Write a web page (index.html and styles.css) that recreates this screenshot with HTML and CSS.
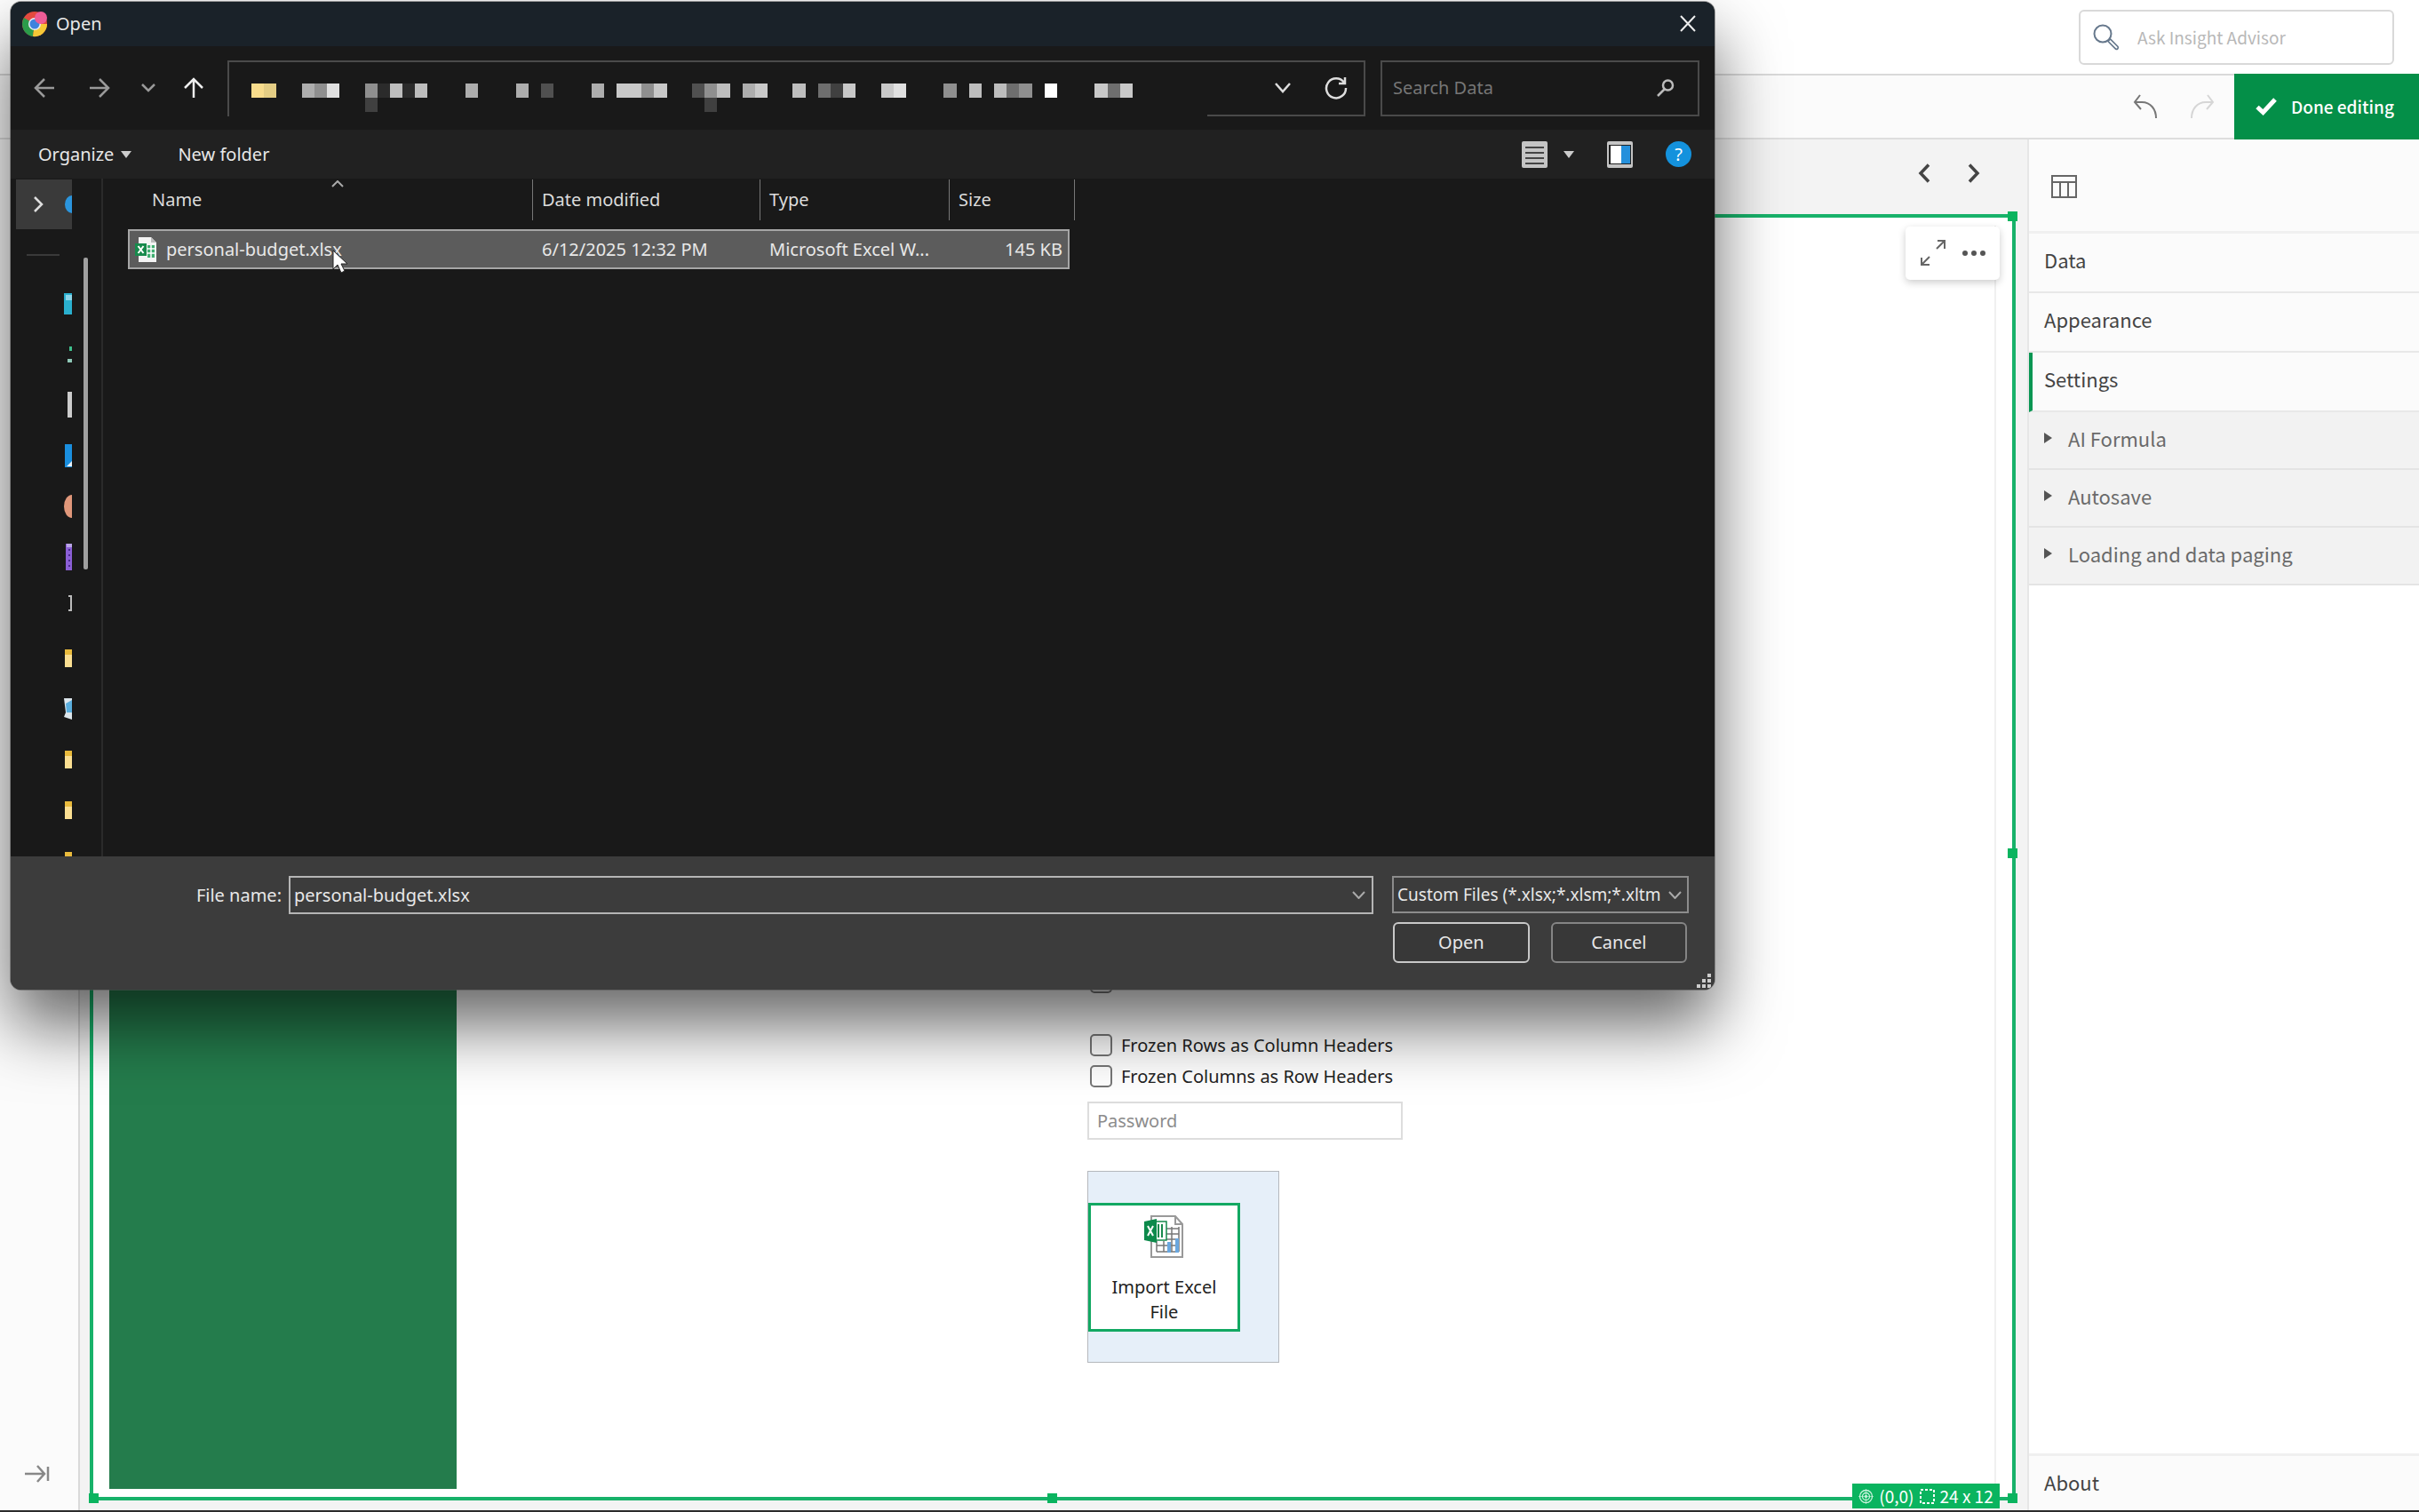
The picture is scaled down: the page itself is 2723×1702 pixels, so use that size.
FILE: index.html
```html
<!DOCTYPE html>
<html lang="en">
<head>
<meta charset="utf-8">
<title>Sheet editor</title>
<link rel="stylesheet" href="styles.css">
</head>
<body>
<header class="topbar">
  <label class="advisor">
    <svg width="30" height="30" viewBox="0 0 30 30" fill="none" stroke="#66788c" stroke-width="2"><circle cx="11" cy="11" r="9.5"/><path d="M17 19.500l2.500-2.500 8.500 8.500a1.800 1.800 0 0 1-2.500 2.500z" stroke-width="1.700"/></svg>
    <input class="advisor-input" type="text" placeholder="Ask Insight Advisor" aria-label="Ask Insight Advisor">
  </label>
</header>
<div class="editbar">
  <button class="icon-button" aria-label="Undo"><svg width="28" height="28" viewBox="0 0 28 28" fill="none" stroke="#777" stroke-width="2"><path d="M8 1L2 9l7 8M2 9h8c10 0 16 8 16 18"/></svg></button>
  <button class="icon-button" aria-label="Redo" disabled><svg width="28" height="28" viewBox="0 0 28 28" fill="none" stroke="#d6d6d6" stroke-width="2"><path d="M20 1l6 8-7 8M26 9h-8C8 9 2 17 2 27"/></svg></button>
  <button class="done"><svg width="24" height="20" viewBox="0 0 24 20" fill="none" stroke="#fff" stroke-width="5"><path d="M2 10.500l6.500 6L22 2"/></svg>Done editing</button>
</div>
<div class="workspace">
  <nav class="rail">
    <button class="icon-button" aria-label="Expand panel"><svg width="28" height="20" viewBox="0 0 28 20" fill="none" stroke="#888" stroke-width="2.500"><path d="M0 10h21M14 1l8 9-8 9M26 2v16"/></svg></button>
  </nav>
  <main class="sheet">
    <div class="sheet-nav">
      <button class="icon-button" aria-label="Previous sheet"><svg width="14" height="22" viewBox="0 0 14 22" fill="none" stroke="#444" stroke-width="3.500"><path d="M12 1.500L3 11l9 9.500"/></svg></button>
      <button class="icon-button" aria-label="Next sheet"><svg width="14" height="22" viewBox="0 0 14 22" fill="none" stroke="#444" stroke-width="3.500"><path d="M2 1.500L11 11l-9 9.500"/></svg></button>
    </div>
    <section class="frame">
      <div class="green-panel"></div>
      <form class="import">
        <label class="check check-first"><input type="checkbox" aria-label="Option"></label>
        <label class="check"><input type="checkbox"> Frozen Rows as Column Headers</label>
        <label class="check"><input type="checkbox"> Frozen Columns as Row Headers</label>
        <input class="password" type="password" placeholder="Password" aria-label="Password">
        <div class="drop">
          <button class="import-button" type="button">
            <svg width="46" height="50" viewBox="0 0 46 50" fill="none">
              <path d="M9 2h27l8 9v37H9z" fill="#fff" stroke="#999" stroke-width="2"/><path d="M36 2v9h8" stroke="#999" stroke-width="2"/>
              <path d="M26 16h14M26 22h14M26 28h14M15 35h25M15 42h25M15 30v12M23 30v12M32 14v28M40 14v28" stroke="#777" stroke-width="1.500"/>
              <path d="M27 31h4v12h-4zM36 27h4v16h-4z" fill="#6aa7df"/>
              <path d="M12 8h14v21H12z" fill="#fff" stroke="#178a4c" stroke-width="1.500"/><path d="M17 11v15M21 11v15" stroke="#178a4c" stroke-width="2"/>
              <path d="M1 8l14-3v27L1 29z" fill="#0d8a4b"/><path d="M5 13l6 11M11 13L5 24" stroke="#fff" stroke-width="2"/>
            </svg>
            <span>Import Excel<br>File</span>
          </button>
        </div>
      </form>
      <div class="object-tools">
        <button class="icon-button" aria-label="Full screen"><svg width="30" height="30" viewBox="0 0 30 30" fill="none" stroke="#666" stroke-width="2"><path d="M19 10L28 1M20 1h8v9M11 19L2 28M2 20v8h9"/></svg></button>
        <button class="icon-button" aria-label="More"><svg width="26" height="6" viewBox="0 0 26 6" fill="#555"><circle cx="3" cy="3" r="3"/><circle cx="13" cy="3" r="3"/><circle cx="23" cy="3" r="3"/></svg></button>
      </div>
      <i class="handle top right"></i><i class="handle middle right"></i><i class="handle bottom right"></i><i class="handle bottom left"></i><i class="handle bottom center"></i>
      <div class="size-badge">
        <svg width="17" height="17" viewBox="0 0 17 17" fill="none" stroke="#c9f2dc" stroke-width="1.300"><circle cx="8.500" cy="8.500" r="7"/><circle cx="8.500" cy="8.500" r="4"/><circle cx="8.500" cy="8.500" r="1"/><path d="M8.500 0v17M0 8.500h17" stroke-width=".6"/></svg>
        <span>(0,0)</span>
        <svg width="17" height="17" viewBox="0 0 17 17" fill="none" stroke="#fff" stroke-width="2"><path d="M1 1h15v15H1z" stroke-dasharray="3 2"/></svg>
        <span>24 x 12</span>
      </div>
    </section>
  </main>
  <aside class="props">
    <div class="props-head"><svg width="29" height="26" viewBox="0 0 29 26" fill="none" stroke="#666" stroke-width="2"><path d="M1 1h27v24H1zM1 8h27M10 8v17M19 8v17"/></svg></div>
    <button class="prop">Data</button>
    <button class="prop">Appearance</button>
    <button class="prop active">Settings</button>
    <button class="subprop"><i class="tri"></i>AI Formula</button>
    <button class="subprop"><i class="tri"></i>Autosave</button>
    <button class="subprop"><i class="tri"></i>Loading and data paging</button>
    <button class="about">About</button>
  </aside>
</div>

<div class="dialog" role="dialog" aria-label="Open">
  <div class="titlebar">
    <svg width="30" height="30" viewBox="0 0 30 30"><circle cx="15" cy="15" r="14" fill="#e34a3f"/><path d="M15 15L3 8a14 14 0 0 0 10 21z" fill="#2b9c4a"/><path d="M15 15h14a14 14 0 0 1-16 14z" fill="#f5c836"/><circle cx="15" cy="15" r="7" fill="#e8eef5"/><circle cx="15" cy="15" r="5.500" fill="#3f83dd"/><circle cx="22" cy="8" r="7" fill="#ee5c96"/></svg>
    <span class="title">Open</span>
    <button class="icon-button" aria-label="Close"><svg width="20" height="20" viewBox="0 0 20 20" stroke="#eee" stroke-width="2"><path d="M2 1l16 17M18 1L2 18"/></svg></button>
  </div>
  <div class="navbar">
    <button class="icon-button" aria-label="Back"><svg width="24" height="24" viewBox="0 0 24 24" fill="none" stroke="#999" stroke-width="2.500"><path d="M23 12H2M12 2L2 12l10 10"/></svg></button>
    <button class="icon-button" aria-label="Forward"><svg width="24" height="24" viewBox="0 0 24 24" fill="none" stroke="#999" stroke-width="2.500"><path d="M1 12h21M12 2l10 10-10 10"/></svg></button>
    <button class="icon-button" aria-label="Recent"><svg width="16" height="10" viewBox="0 0 16 10" fill="none" stroke="#999" stroke-width="2.500"><path d="M1 1l7 7 7-7"/></svg></button>
    <button class="icon-button" aria-label="Up"><svg width="24" height="24" viewBox="0 0 24 24" fill="none" stroke="#eee" stroke-width="2.500"><path d="M12 23V2M2 12L12 2l10 10"/></svg></button>
    <div class="address">
      <svg class="crumbs" viewBox="0 0 70 2" preserveAspectRatio="none" shape-rendering="crispEdges">
        <path fill="#f8dc8c" d="M0 0h1v1H0z"/><path fill="#e4cd84" d="M1 0h1v1H1z"/>
        <path fill="#adadad" d="M4 0h1v1H4zM17 0h1v1h-1zM21 0h1v1h-1zM27 0h1v1h-1zM39 0h1v1h-1z"/>
        <path fill="#8f8f8f" d="M5 0h1v1H5zM9 0h1v1H9zM31 0h1v1h-1zM36 0h1v1h-1zM61 0h1v1h-1zM55 0h1v1h-1z"/>
        <path fill="#e0e0e0" d="M6 0h1v1H6zM51 0h1v1h-1z"/>
        <path fill="#404040" d="M9 1h1v1H9zM36 1h1v1h-1zM46 0h1v1h-1z"/>
        <path fill="#2b2b2b" d="M10 0h1v1h-1zM12 0h1v1h-1z"/>
        <path fill="#bdbdbd" d="M11 0h1v1h-1zM13 0h1v1h-1zM37 0h1v1h-1zM43 0h1v1h-1zM57 0h1v1h-1zM59 0h1v1h-1z"/>
        <path fill="#505050" d="M23 0h1v1h-1zM35 0h1v1h-1z"/>
        <path fill="#c8c8c8" d="M29 0h2v1h-2zM32 0h1v1h-1zM40 0h1v1h-1zM47 0h1v1h-1zM50 0h1v1h-1zM67 0h1v1h-1zM69 0h1v1h-1z"/>
        <path fill="#6e6e6e" d="M45 0h1v1h-1zM60 0h1v1h-1zM68 0h1v1h-1z"/>
        <path fill="#fff" d="M63 0h1v1h-1z"/>
      </svg>
      <div class="address-end">
        <button class="icon-button" aria-label="Previous locations"><svg width="18" height="12" viewBox="0 0 18 12" fill="none" stroke="#ddd" stroke-width="2.500"><path d="M1 1l8 9 8-9"/></svg></button>
        <button class="icon-button" aria-label="Refresh"><svg width="26" height="26" viewBox="0 0 26 26" fill="none" stroke="#ddd" stroke-width="2.500"><path d="M22 7A11 11 0 1 0 24 13M23 1v7h-7"/></svg></button>
      </div>
    </div>
    <label class="search">
      <input class="search-input" type="text" placeholder="Search Data" aria-label="Search Data">
      <svg width="20" height="20" viewBox="0 0 20 20" fill="none" stroke="#bbb" stroke-width="2.500"><circle cx="12.500" cy="7" r="5.500"/><path d="M9 11l-8 8"/></svg>
    </label>
  </div>
  <div class="toolbar">
    <button class="tool">Organize <i class="caret"></i></button>
    <button class="tool">New folder</button>
    <div class="tool-icons">
      <button class="icon-button" aria-label="View"><svg width="29" height="30" viewBox="0 0 29 30"><rect width="29" height="30" rx="2" fill="#c4c4c4"/><path d="M4 7h21M4 13h21M4 19h21M4 25h21" stroke="#444" stroke-width="2"/></svg><i class="caret"></i></button>
      <button class="icon-button" aria-label="Preview pane"><svg width="29" height="30" viewBox="0 0 29 30"><rect width="29" height="30" rx="2" fill="#c4c4c4"/><path d="M2 4h25v22H2z" fill="#222"/><path d="M4 5h12v20H4z" fill="#fff"/><path d="M16 5h10v20H16z" fill="#2490dc"/></svg></button>
      <button class="help" aria-label="Help">?</button>
    </div>
  </div>
  <div class="browser">
    <div class="tree">
      <div class="tree-top"><svg width="11" height="18" viewBox="0 0 11 18" fill="none" stroke="#ddd" stroke-width="2.500"><path d="M1 1l8 8-8 8"/></svg><i class="cloud"></i></div>
      <hr class="tree-line">
      <ul class="tree-list">
        <li><svg width="10" height="24"><path d="M1 0h9v24H1z" fill="#2ab0cf"/><path d="M3 2h7v6H3z" fill="#8cd6ea"/></svg></li>
        <li><svg width="10" height="20"><path d="M7 1h3v5H7z" fill="#3fbf8c"/><path d="M5 15h5v4H5z" fill="#8fc9b8"/></svg></li>
        <li><svg width="10" height="29"><rect x="5" width="5" height="29" fill="#ccc"/></svg></li>
        <li><svg width="10" height="26"><path d="M2 0h8v26H2z" fill="#1a8fdf"/><path d="M10 19v6H4z" fill="#e8f2fa"/></svg></li>
        <li><svg width="10" height="28"><ellipse cx="10" cy="14" rx="9" ry="13" fill="#e0977a"/></svg></li>
        <li><svg width="10" height="30"><path d="M3 0h7v30H3z" fill="#8b5fd6"/><path d="M4 0h6v4H4z" fill="#b9a4e6"/><path d="M7 6v22" stroke="#4b2a90" stroke-width="2" stroke-dasharray="2 4"/></svg></li>
        <li><svg width="10" height="30"><path d="M6 2h3v16H6" fill="none" stroke="#bbb" stroke-width="2"/></svg></li>
        <li><svg width="10" height="20"><path d="M2 0h8v20H2z" fill="#fbdf92"/><path d="M2 0h8v6H2z" fill="#eabb3d"/></svg></li>
        <li><svg width="10" height="24"><path d="M1 0h9v24L1 21l2-5z" fill="#dde6ec"/><path d="M3 6l7-4v14H4z" fill="#5aaede"/></svg></li>
        <li><svg width="10" height="20"><path d="M2 0h8v20H2z" fill="#fbdf92"/><path d="M2 0h8v6H2z" fill="#eabb3d"/></svg></li>
        <li><svg width="10" height="20"><path d="M2 0h8v20H2z" fill="#fbdf92"/><path d="M2 0h8v6H2z" fill="#eabb3d"/></svg></li>
        <li><svg width="10" height="20"><path d="M2 0h8v20H2z" fill="#fbdf92"/><path d="M2 0h8v6H2z" fill="#eabb3d"/></svg></li>
      </ul>
      <i class="scroll-thumb"></i>
    </div>
    <div class="files">
      <table class="file-table">
        <colgroup><col class="c-name"><col class="c-date"><col class="c-type"><col class="c-size"><col class="c-end"></colgroup>
        <thead><tr><th class="h-name">Name<svg class="sort" width="14" height="8" viewBox="0 0 14 8" fill="none" stroke="#aaa" stroke-width="2"><path d="M1 7l6-6 6 6"/></svg></th><th>Date modified</th><th>Type</th><th colspan="2">Size</th></tr></thead>
        <tbody><tr>
          <td class="f-name"><span class="file"><svg width="25" height="28" viewBox="0 0 25 28"><path d="M4 0h14l6 6v22H4z" fill="#f4f4f4"/><path d="M18 0v6h6z" fill="#bbb"/><path d="M14 9h8v14h-8z" fill="#3fae70"/><path d="M14 13h8M14 18h8M18 9v14" stroke="#fff" stroke-width="1.500"/><path d="M0 7h13v14H0z" fill="#178a4c"/><path d="M3.500 10l6 8M9.500 10l-6 8" stroke="#fff" stroke-width="2"/></svg>personal-budget.xlsx</span></td>
          <td>6/12/2025 12:32 PM</td><td>Microsoft Excel W...</td><td class="f-size">145 KB</td><td class="f-end"></td>
        </tr></tbody>
      </table>
      <svg class="pointer" width="18" height="28" viewBox="0 0 18 28"><path d="M1 1v21l5-5 4 9 4-2-4-8h7z" fill="#fff" stroke="#222" stroke-width="1"/></svg>
    </div>
  </div>
  <div class="dialog-foot">
    <label class="name-label" for="filename">File name:</label>
    <div class="combo"><input id="filename" class="combo-input" type="text" value="personal-budget.xlsx"><svg width="15" height="9" viewBox="0 0 15 9" fill="none" stroke="#aaa" stroke-width="2"><path d="M1 1l6.500 7L14 1"/></svg></div>
    <div class="actions">
      <div class="filter"><select class="filter-select" aria-label="File type"><option>Custom Files (*.xlsx;*.xlsm;*.xltm</option></select><svg width="15" height="9" viewBox="0 0 15 9" fill="none" stroke="#aaa" stroke-width="2"><path d="M1 1l6.500 7L14 1"/></svg></div>
      <div class="buttons"><button class="btn primary">Open</button><button class="btn">Cancel</button></div>
    </div>
    <svg class="grip" width="16" height="16" viewBox="0 0 16 16" fill="#ccc"><path d="M12 0h4v4h-4zM6 6h4v4H6zM12 6h4v4h-4zM0 12h4v4H0zM6 12h4v4H6zM12 12h4v4h-4z"/></svg>
  </div>
</div>
</body>
</html>
```
FILE: styles.css
```css
* { box-sizing: border-box; }
body {
  margin: 0;
  min-height: 100vh;
  display: flex;
  flex-direction: column;
  position: relative;
  background: #fff;
  border-bottom: 2px solid #2b2b2b;
  font: 20px/28px "Noto Sans", sans-serif;
  color: #222;
}
button, input, select { font: inherit; color: inherit; margin: 0; }
button { border: 0; background: none; padding: 0; }
input { min-width: 0; outline: 0; }
svg { display: block; flex: none; }
.icon-button { display: flex; align-items: center; }

/* application bars */
.topbar, .editbar, .props, .size-badge { font-family: "Noto Sans CJK SC", sans-serif; }
.topbar {
  height: 85px;
  display: flex;
  justify-content: flex-end;
  align-items: center;
  padding-right: 28px;
  border-bottom: 2px solid #d9d9d9;
}
.advisor {
  display: flex;
  align-items: center;
  gap: 20px;
  width: 355px;
  height: 62px;
  padding: 0 14px;
  border: 2px solid #d9d9d9;
  border-radius: 6px;
}
.advisor-input { flex: 1; border: 0; background: none; padding: 0; font-size: 19px; }
.advisor-input::placeholder { color: #b8b8b8; opacity: 1; }
.editbar {
  height: 72px;
  display: flex;
  justify-content: flex-end;
  align-items: stretch;
  gap: 36px;
  background: #fbfbfb;
  border-bottom: 2px solid #dedede;
}
.done {
  display: flex;
  align-items: center;
  gap: 16px;
  width: 208px;
  margin: -2px 0 -2px -14px;
  padding-left: 24px;
  background: #048f48;
  color: #fff;
  font-size: 19px;
  font-weight: 500;
}
.workspace { flex: 1; display: flex; align-items: stretch; }
.rail {
  width: 90px;
  display: flex;
  flex-direction: column;
  justify-content: flex-end;
  align-items: center;
  padding: 0 4px 31px 0;
  background: #fbfbfb;
  border-right: 2px solid #d9d9d9;
}
.sheet {
  flex: 1;
  display: flex;
  flex-direction: column;
  padding: 0 13px 11px 11px;
  background: #f3f3f3;
}
.sheet-nav {
  height: 84px;
  display: flex;
  justify-content: flex-end;
  gap: 42px;
  padding: 0 40px 8px 0;
}

/* selected sheet object */
.frame {
  flex: 1;
  position: relative;
  display: flex;
  padding: 9px 18px;
  background: #fff;
  border: 4px solid #18b26a;
}
.green-panel { width: 391px; background: #247c4c; }
.import {
  flex: 1;
  display: flex;
  flex-direction: column;
  align-items: flex-start;
  justify-content: flex-end;
  padding: 0 0 142px calc(33% + 9px);
  border-right: 2px solid #f0f0f0;
}
.check { display: flex; align-items: center; gap: 10px; height: 35px; padding-left: 3px; }
.check-first { margin-bottom: 36px; }
.check input {
  appearance: none;
  width: 25px;
  height: 25px;
  border: 2px solid #777;
  border-radius: 5px;
}
.password {
  width: 355px;
  height: 43px;
  margin: 11px 0 35px;
  padding: 0 9px;
  border: 2px solid #ddd;
  background: #fff;
}
.password::placeholder { color: #8c8c8c; opacity: 1; }
.drop {
  width: 216px;
  height: 216px;
  display: flex;
  align-items: center;
  background: #e6eff9;
  border: 1px solid #b5b8bd;
}
.import-button {
  width: 171px;
  height: 145px;
  display: flex;
  flex-direction: column;
  align-items: center;
  gap: 18px;
  padding-top: 10px;
  border: 3px solid #12a862;
  background: #fff;
}
.object-tools {
  position: absolute;
  top: 10px;
  right: 14px;
  width: 106px;
  height: 60px;
  display: flex;
  align-items: center;
  justify-content: center;
  gap: 18px;
  background: #fff;
  border-radius: 5px;
  box-shadow: 0 3px 8px #0003;
}
.handle { position: absolute; width: 11px; height: 11px; background: #0ab45f; }
.top { top: -7px; }
.middle { top: calc(50% - 10px); }
.bottom { bottom: -7px; }
.right { right: -6px; }
.left { left: -5px; }
.center { left: calc(50% - 6px); }
.size-badge {
  position: absolute;
  right: 14px;
  bottom: -13px;
  width: 166px;
  height: 28px;
  display: flex;
  align-items: center;
  justify-content: center;
  gap: 6px;
  background: #0ab45f;
  color: #fff;
  font-size: 19px;
}

/* property panel */
.props {
  width: 441px;
  display: flex;
  flex-direction: column;
  border-left: 2px solid #e6e6e6;
  font-size: 22px;
  color: #444;
}
.props-head { height: 106px; padding: 40px 25px; background: #fbfbfb; border-bottom: 3px solid #f0f0f0; }
.prop { height: 67px; padding: 0 0 7px 17px; text-align: left; background: #fbfbfb; border-bottom: 2px solid #e8e8e8; }
.active { border-left: 4px solid #079652; padding-left: 13px; }
.subprop {
  height: 65px;
  display: flex;
  align-items: center;
  gap: 18px;
  padding: 0 0 5px 17px;
  background: #f2f2f2;
  border-bottom: 2px solid #e4e4e4;
  color: #6a6a6a;
}
.tri { border-left: 9px solid #555; border-top: 6px solid transparent; border-bottom: 6px solid transparent; }
.about { height: 64px; margin-top: auto; padding: 0 0 3px 17px; text-align: left; background: #fbfbfb; border-top: 3px solid #f0f0f0; }

/* file dialog */
.dialog {
  position: absolute;
  top: 2px;
  left: 12px;
  width: calc(70% + 12px);
  background: #191919;
  color: #e8e8e8;
  border-radius: 12px;
  overflow: hidden;
  box-shadow: 0 0 0 1px #5558, 0 40px 76px #0009;
}
.titlebar { height: 50px; display: flex; align-items: center; gap: 9px; padding: 0 20px 0 12px; background: #1a2229; }
.title { flex: 1; }
.navbar { height: 94px; display: flex; align-items: center; padding: 0 17px 0 26px; }
.navbar > .icon-button:nth-child(1) { margin-right: 38px; }
.navbar > .icon-button:nth-child(2) { margin-right: 35px; }
.navbar > .icon-button:nth-child(3) { margin-right: 31px; }
.navbar > .icon-button:nth-child(4) { margin-right: 26px; }
.address {
  flex: 1;
  height: 63px;
  display: flex;
  align-items: stretch;
  justify-content: space-between;
  border: 2px solid #4a4a4a;
  border-bottom: 0;
}
.crumbs { width: 992px; height: 32px; margin: 24px 0 0 25px; }
.address-end { width: 176px; display: flex; gap: 38px; justify-content: flex-end; padding-right: 18px; border-bottom: 2px solid #4a4a4a; }
.search { width: 359px; height: 63px; margin-left: 17px; display: flex; align-items: center; padding: 0 26px 0 12px; border: 2px solid #4a4a4a; }
.search-input { flex: 1; border: 0; padding: 0; background: none; }
.search-input::placeholder { color: #767676; opacity: 1; }
.toolbar { height: 55px; display: flex; align-items: center; gap: 52px; padding: 0 26px 0 31px; background: #212121; }
.tool { display: flex; align-items: center; gap: 8px; }
.caret { border-top: 8px solid #ccc; border-left: 6px solid transparent; border-right: 6px solid transparent; }
.tool-icons { margin-left: auto; display: flex; align-items: center; gap: 37px; }
.tool-icons .caret { margin-left: 18px; }
.help { width: 29px; height: 29px; border-radius: 50%; background: #1492dd; color: #fff; line-height: 29px; }
.browser { height: 763px; display: flex; }
.tree { position: relative; width: 104px; display: flex; flex-direction: column; border-right: 2px solid #2a2a2a; overflow: hidden; }
.tree-top { height: 56px; width: 63px; margin: 1px 0 0 6px; display: flex; align-items: center; justify-content: space-between; padding-left: 20px; background: #3a3a3a; flex: none; overflow: hidden; }
.cloud { width: 16px; height: 20px; margin-right: -8px; border-radius: 50%; background: #2b95dd; }
.tree-line { width: 37px; height: 2px; margin: 28px 0 0 18px; border: 0; background: #3a3a3a; flex: none; }
.tree-list { list-style: none; margin: 25px 0 0; padding: 0 0 0 59px; flex: none; }
.tree-list li { height: 57px; display: flex; align-items: center; }
.scroll-thumb { position: absolute; left: 82px; top: 89px; width: 5px; height: 351px; border-radius: 2px; background: #a0a0a0; }
.files { position: relative; flex: 1; padding: 1px 0 0 28px; }
.file-table { table-layout: fixed; width: 1066px; border-spacing: 0; }
.c-name { width: 456px; }
.c-date { width: 256px; }
.c-type { width: 213px; }
.c-size { width: 135px; }
.c-end { width: 6px; }
.file-table th { position: relative; height: 46px; padding: 0 0 0 10px; text-align: left; font-weight: 400; border-right: 1px solid #777; color: #dcdcdc; }
.file-table .h-name { padding-left: 27px; }
.sort { position: absolute; left: 229px; top: 1px; }
.file-table tbody::before { content: ""; display: block; height: 10px; }
.file-table td { height: 45px; padding: 0 0 0 10px; background: #5c5c5c; border: solid #a6a6a6; border-width: 2px 0; }
.file-table .f-name { border-left-width: 2px; padding-left: 6px; }
.file-table .f-size { border-right-width: 2px; padding: 0 6px 0 0; text-align: right; }
.file-table .f-end { background: none; border: 0; }
.file { display: flex; align-items: center; gap: 10px; }
.pointer { position: absolute; left: 258px; top: 80px; }
.dialog-foot { position: relative; height: 150px; display: flex; align-items: flex-start; padding: 22px 29px 0 0; background: #3c3c3c; }
.name-label { width: 305px; line-height: 43px; text-align: right; }
.combo { flex: 1; height: 43px; margin: 0 21px 0 8px; display: flex; align-items: center; padding: 0 7px 0 4px; border: 2px solid #b5b5b5; }
.combo-input { flex: 1; border: 0; padding: 0; background: none; }
.actions { width: 334px; }
.filter { height: 42px; display: flex; align-items: center; padding: 0 6px 0 4px; border: 2px solid #8c8c8c; }
.filter-select { flex: 1; min-width: 0; appearance: none; border: 0; padding: 0; background: none; font-size: 19px; }
.buttons { display: flex; gap: 24px; padding: 10px 2px 0 1px; }
.btn { flex: 1; height: 46px; border: 2px solid #858585; border-radius: 6px; background: #383838; }
.primary { border-color: #c8c8c8; }
.grip { position: absolute; right: 4px; bottom: 2px; }
```
